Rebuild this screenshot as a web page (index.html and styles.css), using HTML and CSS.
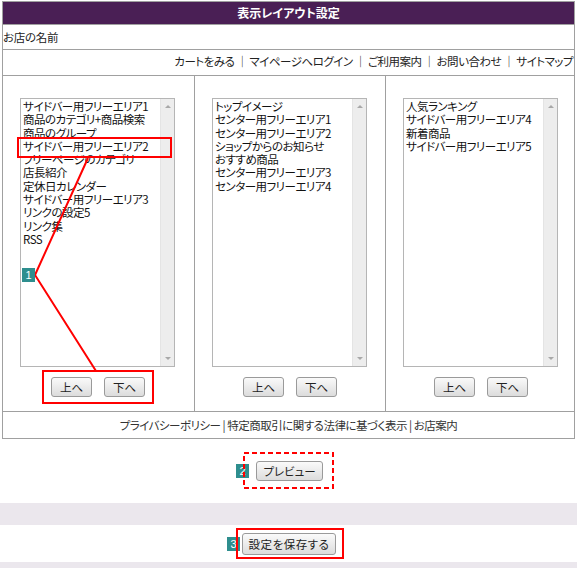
FILE: index.html
```html
<!DOCTYPE html>
<html lang="ja">
<head>
<meta charset="utf-8">
<link rel="stylesheet" href="styles.css">
</head>
<body>
<div class="page">
  <div class="frame">
    <div class="title">表示レイアウト設定</div>
    <div class="shop">お店の名前</div>
    <div class="nav">カートをみる ｜ マイページへログイン ｜ ご利用案内 ｜ お問い合わせ ｜ サイトマップ</div>
    <div class="cols">
      <div class="col">
        <div class="listbox">
          <div class="items">
            <div>サイドバー用フリーエリア1</div>
            <div>商品のカテゴリ+商品検索</div>
            <div>商品のグループ</div>
            <div>サイドバー用フリーエリア2</div>
            <div>フリーページのカテゴリ</div>
            <div>店長紹介</div>
            <div>定休日カレンダー</div>
            <div>サイドバー用フリーエリア3</div>
            <div>リンクの設定5</div>
            <div>リンク集</div>
            <div>RSS</div>
          </div>
          <div class="sb"><span class="up"></span><span class="down"></span></div>
        </div>
        <div class="btns"><button class="btn">上へ</button><button class="btn">下へ</button></div>
      </div>
      <div class="col">
        <div class="listbox">
          <div class="items">
            <div>トップイメージ</div>
            <div>センター用フリーエリア1</div>
            <div>センター用フリーエリア2</div>
            <div>ショップからのお知らせ</div>
            <div>おすすめ商品</div>
            <div>センター用フリーエリア3</div>
            <div>センター用フリーエリア4</div>
          </div>
          <div class="sb"><span class="up"></span><span class="down"></span></div>
        </div>
        <div class="btns"><button class="btn">上へ</button><button class="btn">下へ</button></div>
      </div>
      <div class="col">
        <div class="listbox">
          <div class="items">
            <div>人気ランキング</div>
            <div>サイドバー用フリーエリア4</div>
            <div>新着商品</div>
            <div>サイドバー用フリーエリア5</div>
          </div>
          <div class="sb"><span class="up"></span><span class="down"></span></div>
        </div>
        <div class="btns"><button class="btn">上へ</button><button class="btn">下へ</button></div>
      </div>
    </div>
    <div class="foot">プライバシーポリシー | 特定商取引に関する法律に基づく表示 | お店案内</div>
  </div>

  <div class="preview-row">
    <span class="badge">2</span><button class="btn btn-wide">プレビュー</button>
  </div>
  <div class="band"></div>
  <div class="save-row">
    <span class="badge">3</span><button class="btn btn-save">設定を保存する</button>
  </div>
  <div class="band band-bottom"></div>

  <svg class="annot" width="577" height="568" viewBox="0 0 577 568">
    <rect x="18" y="138" width="153" height="19" fill="none" stroke="#ff0000" stroke-width="2"/>
    <rect x="43" y="371" width="110" height="32" fill="none" stroke="#ff0000" stroke-width="2"/>
    <polyline points="88,158 35,275 96,371" fill="none" stroke="#ff0000" stroke-width="2"/>
    <rect x="244" y="453" width="89" height="35" fill="none" stroke="#ff0000" stroke-width="2" stroke-dasharray="5,3"/>
    <rect x="237" y="529" width="106" height="29" fill="none" stroke="#ff0000" stroke-width="2"/>
  </svg>
  <span class="badge badge-one">1</span>
</div>
</body>
</html>
```

FILE: styles.css
```css
* { box-sizing: border-box; }
body {
  margin: 0;
  background: #fff;
  font-family: "Noto Sans CJK JP", "Noto Sans", sans-serif;
  font-size: 12px;
  color: #222;
  font-feature-settings: "palt" 1;
}
.page {
  position: relative;
  width: 577px;
  height: 568px;
  overflow: hidden;
}
.frame {
  margin: 1px 2px 0 2px;
  border: 1px solid #a0a0a0;
  width: 573px;
}
.title {
  height: 22px;
  background: #4a1f55;
  color: #fff;
  font-weight: bold;
  text-align: center;
  line-height: 22px;
  font-size: 12px;
}
.shop {
  height: 26px;
  line-height: 25px;
  border-top: 1px solid #a0a0a0;
  border-bottom: 1px solid #a0a0a0;
  font-size: 11.5px;
  letter-spacing: -0.3px;
}
.nav {
  height: 25px;
  line-height: 22px;
  text-align: right;
  padding-right: 1px;
  font-size: 11.5px;
  letter-spacing: -0.5px;
}
.cols {
  display: flex;
  border-top: 1px solid #a0a0a0;
  height: 336px;
}
.col {
  flex: 0 0 191px;
  display: flex;
  flex-direction: column;
  align-items: flex-start;
  padding: 22px 0 0 17px;
}
.col + .col {
  border-left: 1px solid #a0a0a0;
}
.col:last-child { flex: 1 1 auto; }
.listbox {
  width: 155px;
  height: 269px;
  border: 1px solid #b5b5b5;
  display: flex;
  background: #fff;
}
.items {
  flex: 1;
  padding: 1px 0 0 2px;
  line-height: 13.3px;
  font-size: 11.5px;
  letter-spacing: -0.5px;
  white-space: nowrap;
  overflow: hidden;
  color: #111;
}
.sb {
  flex: 0 0 14px;
  background: #ededed;
  border-left: 1px solid #e4e4e4;
  position: relative;
}
.sb .up, .sb .down {
  position: absolute;
  left: 4px;
  width: 0; height: 0;
  border-left: 3px solid transparent;
  border-right: 3px solid transparent;
}
.sb .up { top: 6px; border-bottom: 3px solid #a8a8a8; }
.sb .down { bottom: 6px; border-top: 3px solid #a8a8a8; }
.btns {
  display: flex;
  gap: 12px;
  margin: 10px 0 0 31px;
}
.btn {
  font-family: "Noto Sans CJK JP", sans-serif;
  font-feature-settings: "palt" 1;
  font-size: 11.5px;
  color: #222;
  width: 41px;
  height: 20px;
  padding: 0;
  line-height: 18px;
  border: 1px solid #9a9a9a;
  border-radius: 3px;
  background: linear-gradient(#fafafa, #dcdcdc);
}
.foot {
  height: 27px;
  line-height: 26px;
  border-top: 1px solid #a0a0a0;
  text-align: center;
  color: #333;
  font-size: 11.5px;
  letter-spacing: -0.5px;
}
.preview-row {
  display: flex;
  align-items: center;
  height: 64px;
  padding-left: 236px;
  gap: 7px;
}
.btn-wide { width: 67px; height: 20px; }
.band {
  height: 22px;
  background: #ebe7ed;
}
.save-row {
  display: flex;
  align-items: center;
  height: 37px;
  padding-left: 227px;
  gap: 2px;
}
.btn-save { width: 94px; height: 22px; letter-spacing: 0.5px; }
.band-bottom { height: 8px; }
.badge {
  display: inline-block;
  width: 13px;
  height: 14px;
  background: #2e8e8e;
  color: #fff;
  font-size: 11px;
  line-height: 14px;
  text-align: center;
  font-family: "Liberation Sans", sans-serif;
}
.badge-one {
  position: absolute;
  left: 22px;
  top: 268px;
}
.annot {
  position: absolute;
  left: 0;
  top: 0;
  pointer-events: none;
}
```
